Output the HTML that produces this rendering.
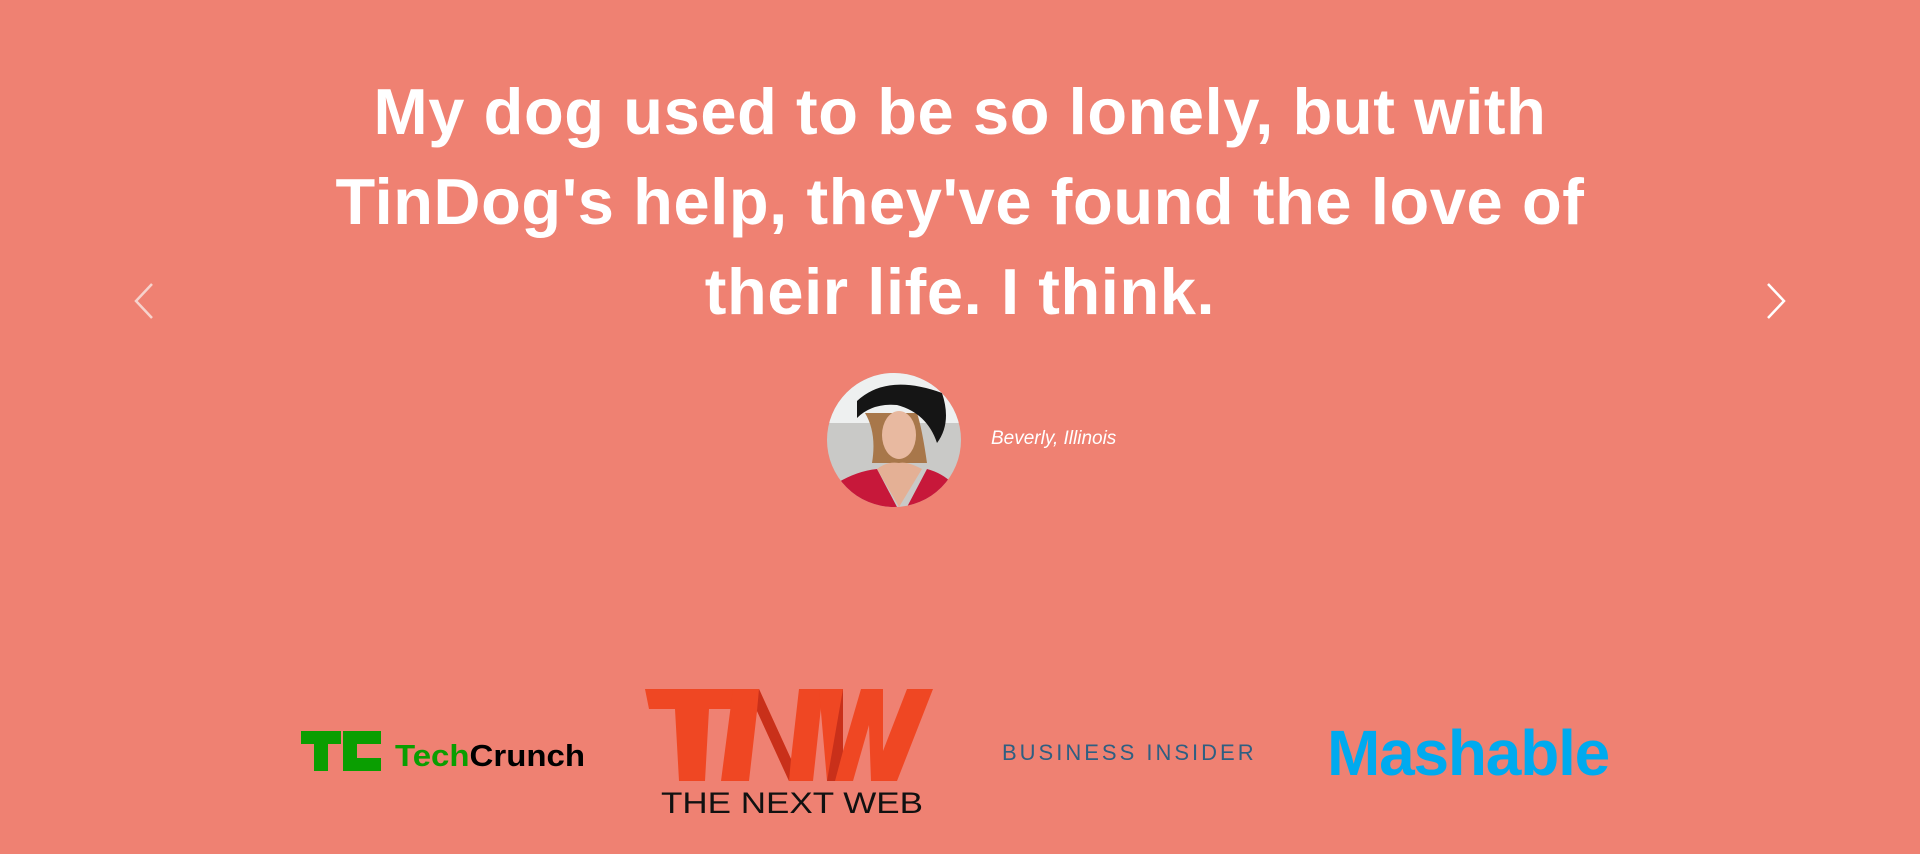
<!DOCTYPE html>
<html><head><meta charset="utf-8"><style>
html,body{margin:0;padding:0}
body{width:1920px;height:854px;background:#ef8172;position:relative;overflow:hidden;font-family:"Liberation Sans",sans-serif}
.q{position:absolute;left:0;width:1920px;top:67px;text-align:center;color:#fff;font-weight:bold;font-size:65px;line-height:90px;letter-spacing:0.6px}
.arrow{position:absolute;top:282px}
.name{position:absolute;left:991px;top:428px;color:#fff;font-style:italic;font-size:19px}
.abs{position:absolute}
</style></head><body>
<div class="q">My dog used to be so lonely, but with<br>TinDog's help, they've found the love of<br>their life. I think.</div>
<svg class="arrow" style="left:132px" width="24" height="38" viewBox="0 0 24 38"><path d="M20 2 L4 19 L20 36" stroke="#f6d3cd" stroke-width="2.5" fill="none"/></svg>
<svg class="arrow" style="left:1764px" width="24" height="38" viewBox="0 0 24 38"><path d="M4 2 L20 19 L4 36" stroke="#fff" stroke-width="2.5" fill="none"/></svg>
<svg class="abs" style="left:827px;top:373px" width="134" height="134" viewBox="0 0 134 134">
<defs><clipPath id="c"><circle cx="67" cy="67" r="67"/></clipPath></defs>
<g clip-path="url(#c)">
<rect width="134" height="134" fill="#c9c9c7"/>
<rect width="134" height="50" fill="#eef0f0"/>
<path d="M38 40 Q50 60 45 90 L100 90 Q95 55 90 40 Z" fill="#a8774a"/>
<ellipse cx="72" cy="62" rx="17" ry="24" fill="#e8b9a0"/>
<path d="M30 28 Q60 0 115 20 Q125 50 110 70 Q100 40 70 32 Q45 30 30 45 Z" fill="#151515"/>
<path d="M0 134 L10 110 Q30 98 50 96 L70 134 L80 134 L100 96 Q115 100 125 110 L134 134 Z" fill="#c7183a"/>
<path d="M50 96 L72 134 L95 96 Q80 88 72 90 Q60 88 50 96Z" fill="#e4b095"/>
</g></svg>
<div class="name">Beverly, Illinois</div>
<svg class="abs" style="left:301px;top:731px" width="290" height="42" viewBox="0 0 290 42">
<path d="M0 0h40v13h-13v27h-14v-27h-13z M42 0h38v13h-24v14h24v13h-38z" fill="#0a9e01"/>
<text x="94" y="35" font-family="Liberation Sans" font-weight="bold" font-size="31" fill="#0a9e01" textLength="190" lengthAdjust="spacingAndGlyphs">Tech<tspan fill="#000">Crunch</tspan></text>
</svg>
<svg class="abs" style="left:645px;top:689px" width="290" height="126" viewBox="0 0 290 126">
<path d="M0 0H92L88 20H64L60 92H34L30 20H4Z" fill="#ef4723"/>
<path d="M76 92L88 0H114L146 70L154 0H178L168 92H144L112 22L104 92Z" fill="#ef4723"/>
<path d="M174 0H198L198 62L216 0H238L238 62L262 0H288L252 92H226L224 36L208 92H182Z" fill="#ef4723"/>
<path d="M114 0L146 70L144 92L112 22Z" fill="#c9301a"/>
<path d="M198 0L198 62L190 92L182 92Z" fill="#c9301a"/>
<text x="16" y="124" font-family="Liberation Sans" font-size="30" fill="#111" textLength="262" lengthAdjust="spacingAndGlyphs">THE NEXT WEB</text>
</svg>
<div class="abs" style="left:1002px;top:740px;color:#2e5f82;font-size:22px;letter-spacing:3px">BUSINESS INSIDER</div>
<div class="abs" style="left:1327px;top:716px;color:#00aaef;font-size:64px;font-weight:bold;letter-spacing:-1.2px">Mashable</div>
</body></html>
